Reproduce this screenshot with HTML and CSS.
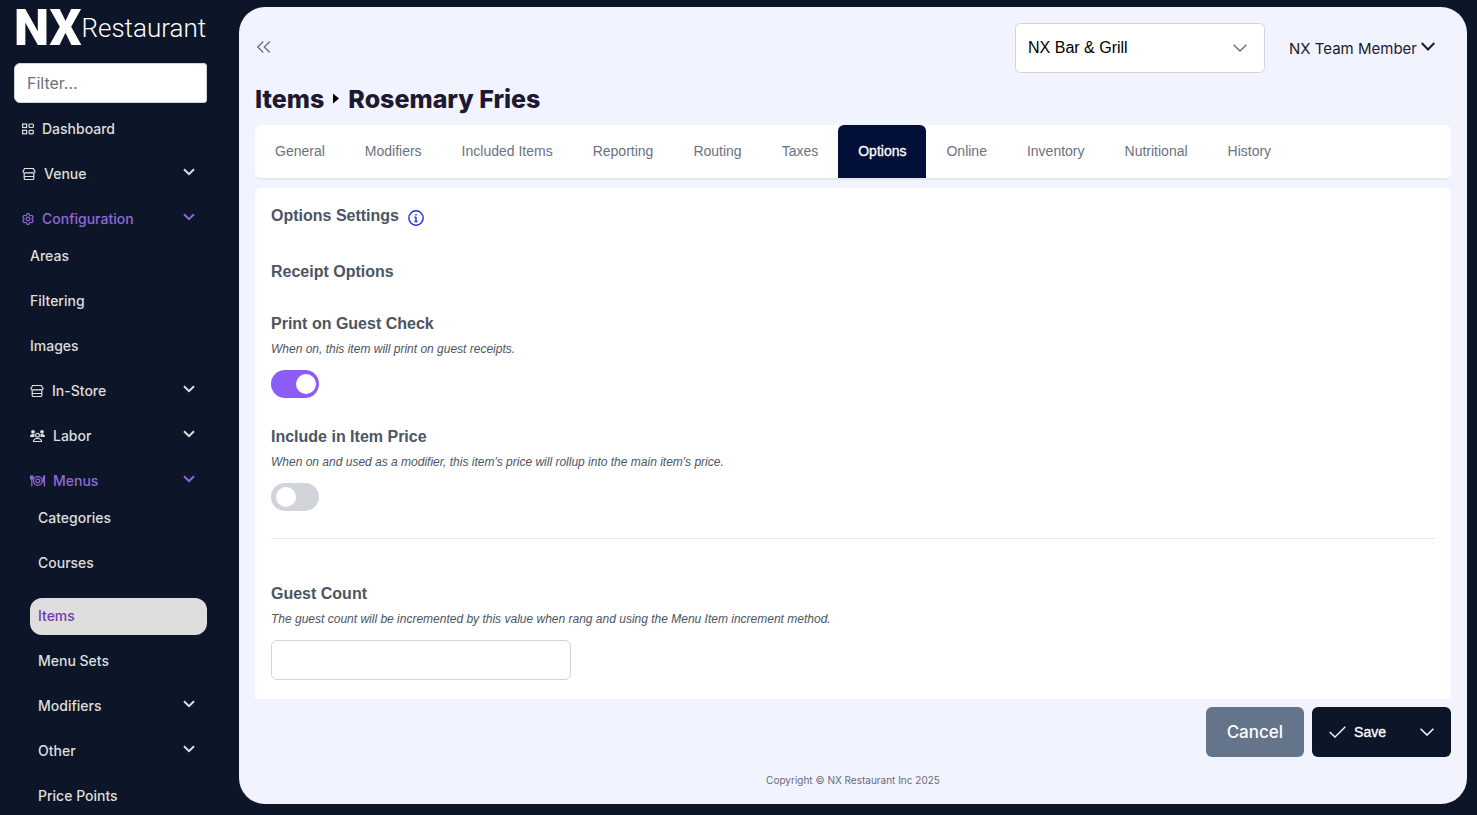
FILE: index.html
```html
<!DOCTYPE html>
<html lang="en">
<head>
    <meta charset="UTF-8">
    <meta name="viewport" content="width=device-width, initial-scale=1.0">
    <title>Items - Rosemary Fries</title>
    <link rel="stylesheet" href="styles.css">
</head>
<body>
    <!-- Shared icons -->
    <svg class="icon-defs" aria-hidden="true">
        <symbol id="chevron" viewBox="0 0 12 8">
            <path d="M1 1.2 L6 6.2 L11 1.2" fill="none" stroke="currentColor" stroke-width="2"/>
        </symbol>
        <symbol id="chevron-thin" viewBox="0 0 14 8">
            <path d="M.6 .8 L7 7 L13.4 .8" fill="none" stroke="currentColor" stroke-width="1.5"/>
        </symbol>
        <symbol id="shop" viewBox="0 0 14 14">
            <path d="M2.6 1.5h8.800L13 4.500c0 1-.6 1.500-1.500 1.500S10 5.600 10 5c0 .6-.6 1-1.500 1S7 5.600 7 5c0 .6-.6 1-1.500 1S4 5.600 4 5c0 .6-.6 1-1.500 1S1 5.500 1 4.500zM2.200 6v5.500c0 .6.4 1 1 1h7.600c.6 0 1-.4 1-1V6M2.200 9.500h9.600" fill="none" stroke="currentColor" stroke-width="1.200"/>
        </symbol>
    </svg>

    <aside class="sidebar">
        <a href="#" class="logo"><span class="logo-mark">NX</span><span class="logo-name">Restaurant</span></a>
        <input type="text" class="filter" placeholder="Filter..." aria-label="Filter menu">

        <nav>
            <ul class="menu">
                <li>
                    <a href="#" class="menu-link">
                        <svg width="12" height="12" viewBox="0 0 12 12" fill="none" stroke="currentColor" stroke-width="1.200"><rect x=".6" y="1" width="4" height="3.500"/><rect x="7" y="1" width="4.400" height="3.500" rx="1"/><rect x=".6" y="7.300" width="4" height="3.500"/><rect x="7" y="7.300" width="4.400" height="3.500" rx="1"/></svg>
                        Dashboard
                    </a>
                </li>
                <li>
                    <a href="#" class="menu-link">
                        <svg width="14" height="14"><use href="#shop"/></svg>
                        Venue
                        <svg class="arrow" width="12" height="8"><use href="#chevron"/></svg>
                    </a>
                </li>
                <li>
                    <a href="#" class="menu-link open">
                        <svg width="12" height="12" viewBox="0 0 16 16" fill="none" stroke="currentColor" stroke-width="1.500"><circle cx="8" cy="8" r="2.500"/><path d="M6.700 .8h2.600l.5 2 1.500.8 2-.6 1.700 2.500-1.500 1.500v2l1.500 1.500-1.700 2.500-2-.6-1.500.8-.5 2H6.700l-.5-2-1.500-.8-2 .6L1 10.500 2.500 9V7L1 5.500 2.700 3l2 .6 1.500-.8z" stroke-linejoin="round"/></svg>
                        Configuration
                        <svg class="arrow" width="12" height="8"><use href="#chevron"/></svg>
                    </a>
                    <ul class="menu submenu">
                        <li><a href="#" class="menu-link">Areas</a></li>
                        <li><a href="#" class="menu-link">Filtering</a></li>
                        <li><a href="#" class="menu-link">Images</a></li>
                        <li>
                            <a href="#" class="menu-link">
                                <svg width="14" height="14"><use href="#shop"/></svg>
                                In-Store
                                <svg class="arrow" width="12" height="8"><use href="#chevron"/></svg>
                            </a>
                        </li>
                        <li>
                            <a href="#" class="menu-link">
                                <svg width="15" height="14" viewBox="0 0 15 14" fill="currentColor"><circle cx="3" cy="2.800" r="1.900"/><circle cx="12" cy="2.800" r="1.900"/><path d="M0 8c0-2 1-3 3-3 .8 0 1.400.2 1.800.6L4.300 8zM15 8c0-2-1-3-3-3-.8 0-1.400.2-1.800.6l.5 2.400z"/><circle cx="7.500" cy="6.300" r="1.900" fill="none" stroke="currentColor" stroke-width="1.200"/><path d="M3.500 12.500c0-2 1.500-3 4-3s4 1 4 3z" fill="none" stroke="currentColor" stroke-width="1.200"/></svg>
                                Labor
                                <svg class="arrow" width="12" height="8"><use href="#chevron"/></svg>
                            </a>
                        </li>
                        <li>
                            <a href="#" class="menu-link open">
                                <svg width="15" height="12" viewBox="0 0 15 12" fill="none" stroke="currentColor" stroke-width="1.200"><circle cx="7.800" cy="6" r="4.300"/><circle cx="7.800" cy="6" r="1.900"/><path d="M.6 .5v3.500h2.400V.5M1.800 .5V11.500M14.400 11.500V.8c-1.300.8-1.500 3.500-1.300 6.200h1.300"/></svg>
                                Menus
                                <svg class="arrow" width="12" height="8"><use href="#chevron"/></svg>
                            </a>
                            <ul class="menu submenu">
                                <li><a href="#" class="menu-link">Categories</a></li>
                                <li><a href="#" class="menu-link">Courses</a></li>
                                <li class="current"><a href="#" class="menu-link" aria-current="page">Items</a></li>
                                <li><a href="#" class="menu-link">Menu Sets</a></li>
                                <li><a href="#" class="menu-link">Modifiers <svg class="arrow" width="12" height="8"><use href="#chevron"/></svg></a></li>
                                <li><a href="#" class="menu-link">Other <svg class="arrow" width="12" height="8"><use href="#chevron"/></svg></a></li>
                                <li><a href="#" class="menu-link">Price Points</a></li>
                            </ul>
                        </li>
                    </ul>
                </li>
            </ul>
        </nav>
    </aside>

    <main class="main">
        <header class="topbar">
            <button type="button" class="collapse" aria-label="Collapse sidebar">
                <svg width="16" height="14" viewBox="0 0 16 14" fill="none" stroke="currentColor" stroke-width="1.400"><path d="M8.300 .5 L2.800 6 L8.300 11.500M14.800 .5 L9.300 6 L14.800 11.500"/></svg>
            </button>
            <div class="venue-select">
                <select aria-label="Venue">
                    <option>NX Bar &amp; Grill</option>
                </select>
                <svg width="14" height="8"><use href="#chevron-thin"/></svg>
            </div>
            <button type="button" class="user">
                NX Team Member
                <svg width="14" height="12" viewBox="0 0 14 12"><path d="M.7 1 L7 7.500 L13.300 1" fill="none" stroke="currentColor" stroke-width="2"/></svg>
            </button>
        </header>

        <h1 class="page-title">
            Items
            <svg width="6" height="12" viewBox="0 0 6 12"><path d="M0 .5 L6 5.500 L0 10.500z" fill="#000"/></svg>
            Rosemary Fries
        </h1>

        <nav class="tabs">
            <a href="#">General</a>
            <a href="#">Modifiers</a>
            <a href="#">Included Items</a>
            <a href="#">Reporting</a>
            <a href="#">Routing</a>
            <a href="#">Taxes</a>
            <a href="#" class="active">Options</a>
            <a href="#">Online</a>
            <a href="#">Inventory</a>
            <a href="#">Nutritional</a>
            <a href="#">History</a>
        </nav>

        <section class="panel">
            <h2 class="heading">
                Options Settings
                <svg class="info" width="16" height="16" viewBox="0 0 16 16" fill="none" stroke="currentColor" stroke-width="1.400"><circle cx="8" cy="8" r="7.200"/><path d="M8 7v4.500M6.500 7.200h1.500M6.500 11.500h3M8 4v1.600"/></svg>
            </h2>
            <h3 class="heading section-heading">Receipt Options</h3>

            <div class="field">
                <label class="heading" for="printCheck">Print on Guest Check</label>
                <p class="hint">When on, this item will print on guest receipts.</p>
                <input type="checkbox" class="toggle" id="printCheck" checked>
            </div>
            <div class="field">
                <label class="heading" for="includePrice">Include in Item Price</label>
                <p class="hint">When on and used as a modifier, this item's price will rollup into the main item's price.</p>
                <input type="checkbox" class="toggle" id="includePrice">
            </div>

            <hr class="divider">

            <div class="field">
                <label class="heading" for="guestCount">Guest Count</label>
                <p class="hint">The guest count will be incremented by this value when rang and using the Menu Item increment method.</p>
                <input type="text" class="text-input" id="guestCount">
            </div>
        </section>

        <div class="actions">
            <button type="button" class="btn btn-cancel">Cancel</button>
            <div class="btn-group">
                <button type="button" class="btn btn-save">
                    <svg width="17" height="12" viewBox="0 0 17 12" fill="none" stroke="currentColor" stroke-width="1.300"><path d="M.7 6 L6 11 L16.300 .7"/></svg>
                    Save
                </button>
                <button type="button" class="btn btn-more" aria-label="More save options">
                    <svg width="14" height="8"><use href="#chevron-thin"/></svg>
                </button>
            </div>
        </div>

        <footer class="copyright">Copyright © NX Restaurant Inc 2025</footer>
    </main>
</body>
</html>
```

FILE: styles.css
```css
* {
    box-sizing: border-box;
}

body {
    display: flex;
    height: 100vh;
    margin: 0;
    overflow: hidden;
    background: #0d1628;
    color: #1e1830;
    font-family: 'Inter', sans-serif;
    font-size: 14px;
}

button,
input,
select {
    font-family: inherit;
}

button {
    border: none;
    cursor: pointer;
}

.icon-defs {
    display: none;
}

/* Sidebar */
.sidebar {
    flex: 0 0 239px;
    padding: 0 32px 0 14px;
    overflow: hidden;
}

.logo {
    display: flex;
    align-items: center;
    height: 55px;
    margin-bottom: 8px;
    color: #fff;
    font-family: 'Roboto', sans-serif;
    text-decoration: none;
    white-space: nowrap;
}

.logo-mark {
    font-size: 50px;
    font-weight: 900;
}

.logo-name {
    font-size: 26px;
    font-weight: 300;
}

.filter {
    display: block;
    width: 100%;
    height: 40px;
    padding: 0 12px;
    border: 1px solid #d1d5db;
    border-radius: 6px 3px 3px 6px;
    background: #fff;
    font-size: 16px;
}

.filter::placeholder {
    color: #6b7280;
}

.menu {
    margin: 8px 0 0;
    padding: 0;
    list-style: none;
}

.menu li {
    margin-bottom: 8px;
}

.submenu {
    margin: 0 0 0 8px;
}

.menu-link {
    display: flex;
    align-items: center;
    gap: 8px;
    height: 37px;
    padding: 0 12px 2px 8px;
    border-radius: 12px;
    color: #dedede;
    font-weight: 500;
    text-decoration: none;
}

.menu-link.open {
    color: #9068d8;
}

.arrow {
    margin: 0 0 4px auto;
}

.menu .current {
    margin-top: 16px;
}

.current .menu-link {
    background: #dedede;
    color: #6f3aa8;
}

/* Main area */
.main {
    display: flex;
    flex: 1;
    flex-direction: column;
    min-width: 0;
    margin: 7px 10px 11px 0;
    padding: 16px 16px 0;
    border-radius: 26px;
    background: #f1f3ff;
}

.topbar {
    display: flex;
    align-items: center;
    gap: 24px;
    padding-right: 16px;
}

.collapse {
    display: flex;
    margin-right: auto;
    padding: 0;
    background: none;
    color: #64748b;
}

.venue-select {
    position: relative;
    width: 250px;
}

.venue-select select {
    width: 100%;
    height: 50px;
    padding: 0 40px 2px 12px;
    border: 1px solid #d1d5db;
    border-radius: 6px;
    appearance: none;
    background: #fff;
    color: #000;
    font-family: 'Liberation Sans', sans-serif;
    font-size: 16px;
}

.venue-select svg {
    position: absolute;
    top: 21px;
    right: 18px;
    color: #6b7280;
    pointer-events: none;
}

.user {
    display: flex;
    align-items: center;
    gap: 4px;
    padding: 0;
    background: none;
    color: #1e1830;
    font-size: 15px;
}

.page-title {
    display: flex;
    align-items: center;
    gap: 9px;
    margin: 0;
    font-size: 25px;
    font-weight: 800;
    line-height: 52px;
}

.tabs {
    display: flex;
    flex-shrink: 0;
    border-bottom: 2px solid #e5e7eb;
    border-radius: 6px;
    background: #fff;
    font-family: 'Liberation Sans', sans-serif;
}

.tabs a {
    padding: 0 20px;
    border-radius: 6px 6px 0 0;
    color: #6b7280;
    line-height: 53px;
    text-decoration: none;
    white-space: nowrap;
}

.tabs .active {
    background: #020f38;
    color: #fff;
    -webkit-text-stroke: 0.3px #fff;
}

.panel {
    flex: 1;
    min-height: 0;
    margin-top: 8px;
    padding: 16px;
    overflow: hidden;
    border-radius: 6px 6px 0 0;
    background: #fff;
    color: #4b5563;
    font-family: 'Liberation Sans', sans-serif;
}

.heading {
    display: block;
    margin: 0;
    font-size: 16px;
    font-weight: 700;
    line-height: 24px;
}

h2.heading {
    display: flex;
    align-items: center;
    gap: 9px;
}

.info {
    margin-top: 4px;
    color: #1d35e0;
}

.section-heading {
    margin: 32px 0 28px;
}

.field {
    margin-bottom: 27px;
}

.hint {
    margin: 0 0 8px;
    font-size: 12px;
    font-style: italic;
    line-height: 26px;
}

.toggle {
    display: block;
    width: 48px;
    height: 28px;
    margin: 0;
    padding: 4px 5px;
    border-radius: 14px;
    appearance: none;
    background: #d1d5db;
    cursor: pointer;
}

.toggle::before {
    content: '';
    display: block;
    width: 20px;
    height: 20px;
    border-radius: 50%;
    background: #fff;
}

.toggle:checked {
    padding: 4px 3px;
    background: #8b5cf6;
}

.toggle:checked::before {
    margin-left: auto;
}

.divider {
    margin: 0 0 43px;
    border: none;
    border-top: 1px solid #e5e7eb;
}

.text-input {
    display: block;
    width: 300px;
    height: 40px;
    padding: 0 12px;
    border: 1px solid #d1d5db;
    border-radius: 6px;
    font-size: 16px;
}

.actions {
    display: flex;
    justify-content: flex-end;
    gap: 8px;
    margin-top: 8px;
}

.btn {
    display: flex;
    align-items: center;
    height: 50px;
    border-radius: 6px;
    background: #0d1628;
    color: #fff;
}

.btn-cancel {
    padding: 0 21px;
    background: #64748b;
    font-size: 17px;
    font-weight: 500;
}

.btn-group {
    display: flex;
}

.btn-save {
    gap: 8px;
    padding: 0 17px;
    border-radius: 6px 0 0 6px;
    font-family: 'Liberation Sans', sans-serif;
    font-size: 14px;
    -webkit-text-stroke: 0.3px #fff;
}

.btn-more {
    padding: 0 17px;
    border-radius: 0 6px 6px 0;
}

.copyright {
    color: #6b6b76;
    font-size: 10px;
    line-height: 47px;
    text-align: center;
}
```
